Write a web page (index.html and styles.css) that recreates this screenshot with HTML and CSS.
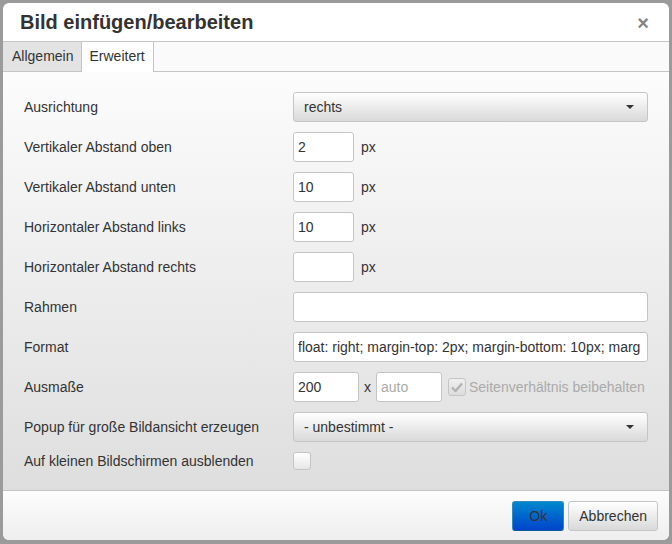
FILE: index.html
```html
<!DOCTYPE html>
<html lang="de">
<head>
    <meta charset="UTF-8">
    <title>Bild einfügen/bearbeiten</title>
    <link rel="stylesheet" href="styles.css">
</head>
<body>

    <div class="dialog">
        <div class="head">
            <div class="title">Bild einfügen/bearbeiten</div>
            <a class="close">×</a>
        </div>

        <div class="tabs">
            <div class="tab">Allgemein</div>
            <div class="tab active">Erweitert</div>
        </div>

        <div class="body">
            <div class="row">
                <label>Ausrichtung</label>
                <div class="select wide"><span>rechts</span><i class="caret"></i></div>
            </div>
            <div class="row">
                <label>Vertikaler Abstand oben</label>
                <div class="input small">2</div><span class="unit">px</span>
            </div>
            <div class="row">
                <label>Vertikaler Abstand unten</label>
                <div class="input small">10</div><span class="unit">px</span>
            </div>
            <div class="row">
                <label>Horizontaler Abstand links</label>
                <div class="input small">10</div><span class="unit">px</span>
            </div>
            <div class="row">
                <label>Horizontaler Abstand rechts</label>
                <div class="input small"></div><span class="unit">px</span>
            </div>
            <div class="row">
                <label>Rahmen</label>
                <div class="input wide"></div>
            </div>
            <div class="row">
                <label>Format</label>
                <div class="input wide clip">float: right; margin-top: 2px; margin-bottom: 10px; marg</div>
            </div>
            <div class="row">
                <label>Ausmaße</label>
                <div class="input dim">200</div>
                <span class="times">x</span>
                <div class="input dim placeholder">auto</div>
                <span class="check disabled"><svg width="12" height="10" viewBox="0 0 12 10"><path d="M1 5.5 L4.5 9 L11 1.5" fill="none" stroke="#b3b3b3" stroke-width="2.4"/></svg></span>
                <span class="check-label">Seitenverhältnis beibehalten</span>
            </div>
            <div class="row">
                <label>Popup für große Bildansicht erzeugen</label>
                <div class="select wide"><span>- unbestimmt -</span><i class="caret"></i></div>
            </div>
            <div class="row short">
                <label>Auf kleinen Bildschirmen ausblenden</label>
                <span class="check"></span>
            </div>
        </div>

        <div class="foot">
            <a class="btn primary">Ok</a>
            <a class="btn">Abbrechen</a>
        </div>
    </div>

</body>
</html>
```

FILE: styles.css
```css
*{
    margin: 0;
    padding: 0;
    box-sizing: border-box;
}
body{
    background-color: #9b9b9b;
    padding: 3px;
    font-family: Arial, "Liberation Sans", sans-serif;
    font-size: 14px;
    color: #333;
}
.dialog{
    width: 666px;
    height: 537px;
    background-color: #fff;
    border-radius: 6px;
    overflow: hidden;
    display: flex;
    flex-direction: column;
}
.head{
    height: 39px;
    flex-shrink: 0;
    border-bottom: 1px solid #c5c5c5;
    display: flex;
    align-items: center;
    justify-content: space-between;
    padding: 0 20px 0 17px;
}
.title{
    font-size: 20px;
    font-weight: bold;
    color: #333;
}
.close{
    font-size: 20px;
    font-weight: bold;
    color: #858585;
    cursor: pointer;
    margin-top: 2px;
}
.tabs{
    height: 30px;
    flex-shrink: 0;
    display: flex;
    background-color: #fafafa;
    border-bottom: 1px solid #c5c5c5;
}
.tab{
    height: 29px;
    line-height: 29px;
    padding: 0 8px 0 9px;
    background-color: #e3e3e3;
    border-right: 1px solid #c5c5c5;
    cursor: pointer;
}
.tab.active{
    background-color: #fff;
    height: 30px;
    padding: 0 8px 0 7px;
}
.body{
    height: 418px;
    flex-shrink: 0;
    padding: 20px 21px 20px 20px;
    background: linear-gradient(#fcfcfc, #dedede);
    display: flex;
    flex-direction: column;
    gap: 10px;
}
.row{
    height: 30px;
    flex-shrink: 0;
    display: flex;
    align-items: center;
}
.row.short{
    height: 18px;
}
.row label{
    width: 270px;
    padding-left: 1px;
    flex-shrink: 0;
}
.input{
    height: 30px;
    line-height: 28px;
    border: 1px solid #c5c5c5;
    border-radius: 3px;
    background-color: #fff;
    padding: 0 4px 0 4px;
    white-space: nowrap;
}
.wide{
    flex: 1;
}
.input.clip{
    overflow: hidden;
}
.input.small{
    width: 61px;
}
.input.dim{
    width: 66px;
}
.input.placeholder{
    color: #aaa;
}
.unit{
    margin-left: 7px;
    color: #333;
}
.times{
    margin: 0 5px 0 5px;
    color: #333;
}
.select{
    height: 30px;
    border: 1px solid #c5c5c5;
    border-radius: 3px;
    background: linear-gradient(#fff, #d9d9d9);
    padding: 0 13px 0 10px;
    display: flex;
    align-items: center;
    justify-content: space-between;
    cursor: pointer;
}
.caret{
    width: 0;
    height: 0;
    border-left: 4px solid transparent;
    border-right: 4px solid transparent;
    border-top: 4px solid #333;
}
.check{
    width: 18px;
    height: 18px;
    border: 1px solid #c5c5c5;
    border-radius: 3px;
    background: linear-gradient(#fff, #e6e6e6);
    display: flex;
    align-items: center;
    justify-content: center;
}
.check.disabled{
    margin-left: 6px;
    background: linear-gradient(#f0f0f0, #dcdcdc);
}
.check-label{
    margin-left: 3px;
    color: #aaa;
}
.foot{
    height: 50px;
    flex-shrink: 0;
    border-top: 1px solid #c5c5c5;
    background: linear-gradient(#fdfdfd, #eeeeee);
    display: flex;
    justify-content: flex-end;
    align-items: flex-start;
    gap: 4px;
    padding: 10px 11px 0 0;
}
.btn{
    height: 30px;
    line-height: 28px;
    padding: 0 10px;
    border: 1px solid #c5c5c5;
    border-radius: 3px;
    background: linear-gradient(#fff, #d9d9d9);
    color: #333;
    cursor: pointer;
}
.btn.primary{
    width: 52px;
    padding: 0;
    text-align: center;
    border-color: #2d8ac7 #2d8ac7 #0a5a9e;
    background: linear-gradient(#0088cc, #0044cc);
    color: #333;
}
```
